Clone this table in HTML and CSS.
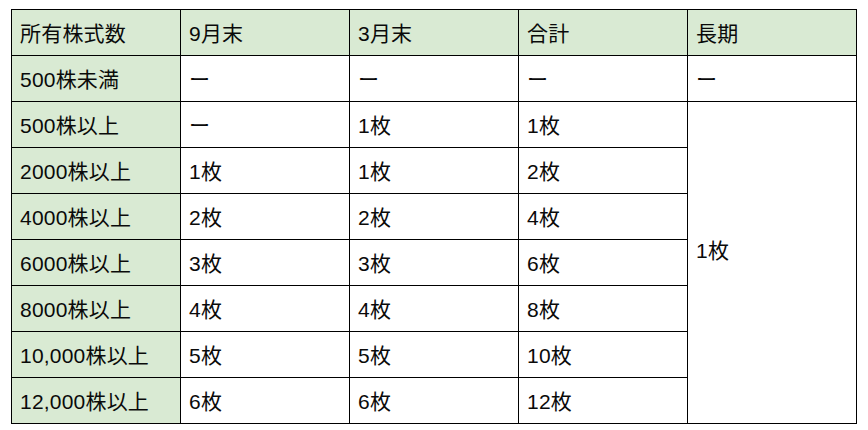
FILE: index.html
```html
<!DOCTYPE html>
<html lang="ja">
<head>
<meta charset="utf-8">
<title>株主優待</title>
<link rel="stylesheet" href="styles.css">
</head>
<body>
<table class="tbl">
  <colgroup>
    <col class="c1"><col class="c"><col class="c"><col class="c"><col class="c">
  </colgroup>
  <tr class="head">
    <th>所有株式数</th><th>9月末</th><th>3月末</th><th>合計</th><th>長期</th>
  </tr>
  <tr>
    <th>500株未満</th><td>ー</td><td>ー</td><td>ー</td><td>ー</td>
  </tr>
  <tr>
    <th>500株以上</th><td>ー</td><td>1枚</td><td>1枚</td><td rowspan="8" class="merged">1枚</td>
  </tr>
  <tr><th>2000株以上</th><td>1枚</td><td>1枚</td><td>2枚</td></tr>
  <tr><th>4000株以上</th><td>2枚</td><td>2枚</td><td>4枚</td></tr>
  <tr><th>6000株以上</th><td>3枚</td><td>3枚</td><td>6枚</td></tr>
  <tr><th>8000株以上</th><td>4枚</td><td>4枚</td><td>8枚</td></tr>
  <tr><th>10,000株以上</th><td>5枚</td><td>5枚</td><td>10枚</td></tr>
  <tr><th>12,000株以上</th><td>6枚</td><td>6枚</td><td>12枚</td></tr>
</table>
</body>
</html>
```
FILE: styles.css
```css
html, body {
  margin: 0;
  padding: 0;
  background: #ffffff;
}
body {
  padding: 9px 0 0 11px;
  font-family: "Liberation Sans", "Noto Sans CJK JP", sans-serif;
  color: #0a0a0a;
}
.tbl {
  border-collapse: collapse;
  table-layout: fixed;
  width: 846px;
  font-size: 21px;
}
.c1 { width: 169px; }
.c { width: 169px; }
.tbl th,
.tbl td {
  border: 1.5px solid #000;
  height: 46px;
  box-sizing: border-box;
  padding: 2px 0 0 8px;
  text-align: left;
  font-weight: normal;
  vertical-align: middle;
  line-height: 1;
  white-space: nowrap;
  letter-spacing: 0.2px;
}
.tbl th {
  background: #d9ead3;
}
.tbl td {
  background: #ffffff;
}
.tbl .merged {
  padding-bottom: 26px;
}
```
